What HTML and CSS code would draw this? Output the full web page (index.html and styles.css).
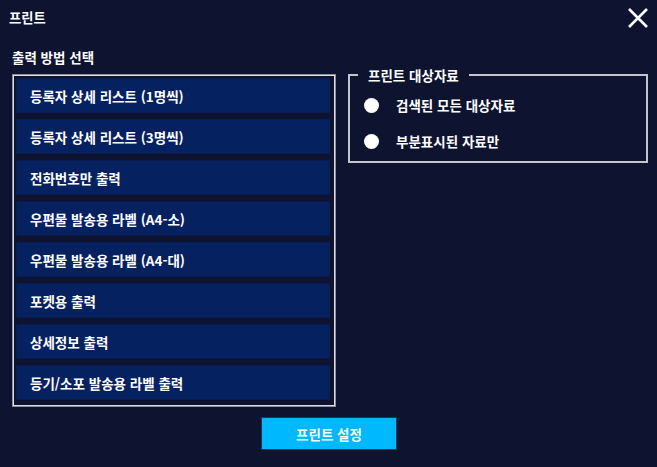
FILE: index.html
```html
<!DOCTYPE html>
<html lang="ko">
<head>
<meta charset="utf-8">
<title>프린트</title>
<link rel="stylesheet" href="styles.css">
</head>
<body>
<div class="dialog">
  <div class="header">
    <span class="title">프린트</span>
    <svg class="close" width="22" height="22" viewBox="0 0 22 22">
      <path d="M2 2 L20 20 M20 2 L2 20" stroke="#ffffff" stroke-width="2.6" fill="none"/>
    </svg>
  </div>
  <div class="main">
    <div class="left">
      <div class="label">출력 방법 선택</div>
      <div class="box">
        <div class="item">등록자 상세 리스트 (1명씩)</div>
        <div class="item">등록자 상세 리스트 (3명씩)</div>
        <div class="item">전화번호만 출력</div>
        <div class="item">우편물 발송용 라벨 (A4-소)</div>
        <div class="item">우편물 발송용 라벨 (A4-대)</div>
        <div class="item">포켓용 출력</div>
        <div class="item">상세정보 출력</div>
        <div class="item">등기/소포 발송용 라벨 출력</div>
      </div>
    </div>
    <div class="right">
      <fieldset class="target">
        <legend>프린트 대상자료</legend>
        <div class="opt"><span class="dot"></span><span>검색된 모든 대상자료</span></div>
        <div class="opt"><span class="dot"></span><span>부분표시된 자료만</span></div>
      </fieldset>
    </div>
  </div>
  <div class="footer">
    <button class="btn">프린트 설정</button>
  </div>
</div>
</body>
</html>
```
FILE: styles.css
```css
html, body {
  margin: 0;
  padding: 0;
  background: #0e1330;
}
body {
  font-family: "Noto Sans CJK KR", "Noto Sans", sans-serif;
  font-weight: 700;
  font-size: 13.5px;
  color: #ffffff;
  width: 657px;
  height: 467px;
  overflow: hidden;
}
.header {
  height: 36px;
  display: flex;
  align-items: center;
  justify-content: space-between;
  padding: 0 8px 0 9px;
}
.title {
  font-size: 13.3px;
  line-height: 18px;
}
.close {
  display: block;
}
.main {
  display: flex;
  gap: 12px;
  padding: 0 9px 0 12px;
}
.left {
  width: 324px;
}
.label {
  line-height: 20px;
  margin-top: 11px;
  margin-bottom: 7px;
}
.box {
  border: 1px solid #8e8e9c;
  box-shadow: inset 0 0 0 1px #dedee4;
  padding: 3px 5px 0 3px;
}
.item {
  height: 35px;
  margin-bottom: 6px;
  background: #062160;
  border: 1px solid #0a1a4e;
  box-sizing: border-box;
  display: flex;
  align-items: center;
  padding-left: 13px;
  line-height: 18px;
}
.right {
  width: 300px;
}
.target {
  margin: 30px 0 0 0;
  border: 2px solid #c4c4cc;
  padding: 3px 0 2px 14px;
  min-width: 0;
}
.target legend {
  margin-left: -6px;
  padding: 0 10px;
  line-height: 18px;
}
.opt {
  height: 36px;
  display: flex;
  align-items: center;
  gap: 17px;
  line-height: 18px;
}
.dot {
  width: 15px;
  height: 15px;
  border-radius: 50%;
  background: #ffffff;
  flex: none;
}
.footer {
  display: flex;
  justify-content: center;
  margin-top: 10px;
}
.btn {
  width: 136px;
  height: 33px;
  background: #00b8fe;
  border: 1px solid #173766;
  color: #ffffff;
  font-family: "Noto Sans CJK KR", "Noto Sans", sans-serif;
  font-weight: 700;
  font-size: 13.5px;
  padding: 0;
  margin-left: 1px;
}
```
